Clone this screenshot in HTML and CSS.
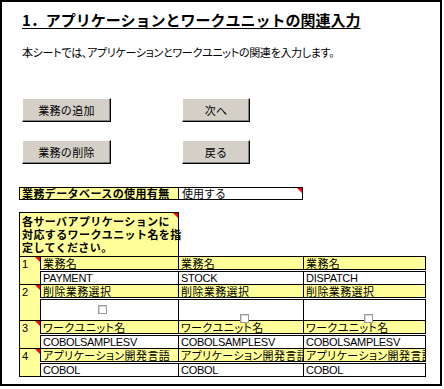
FILE: index.html
```html
<!DOCTYPE html>
<html lang="ja">
<head>
<meta charset="utf-8">
<link rel="stylesheet" href="styles.css">
</head>
<body>
<div class="frame">
  <h1 class="title">1．アプリケーションとワークユニットの関連入力</h1>
  <p class="lead">本シートでは、アプリケーションとワークユニットの関連を入力します。</p>
  <div class="buttons">
    <button class="btn">業務の追加</button>
    <button class="btn">次へ</button>
    <button class="btn">業務の削除</button>
    <button class="btn">戻る</button>
  </div>
  <div class="dbrow">
    <div class="dblabel">業務データベースの使用有無</div>
    <div class="dbvalue">使用する<span class="note"></span></div>
  </div>
  <div class="comment">各サーバアプリケーションに<br>対応するワークユニット名を指<br>定してください。<span class="note"></span></div>
  <table class="grid">
    <colgroup><col class="c-idx"><col class="c-1"><col class="c-2"><col class="c-3"></colgroup>
    <tr class="r-hd">
      <td class="idx" rowspan="2">1<span class="note"></span></td>
      <td class="hd">業務名</td><td class="hd">業務名</td><td class="hd">業務名</td>
    </tr>
    <tr class="r-val">
      <td class="val">PAYMENT</td><td class="val">STOCK</td><td class="val">DISPATCH</td>
    </tr>
    <tr class="r-hd">
      <td class="idx" rowspan="2">2<span class="note"></span></td>
      <td class="hd">削除業務選択</td><td class="hd">削除業務選択</td><td class="hd">削除業務選択</td>
    </tr>
    <tr class="r-cb">
      <td class="val cbcell"><span class="cb cb-1"></span></td>
      <td class="val cbcell"><span class="cb cb-2"></span></td>
      <td class="val cbcell"><span class="cb cb-3"></span></td>
    </tr>
    <tr class="r-hd">
      <td class="idx" rowspan="2">3<span class="note"></span></td>
      <td class="hd">ワークユニット名</td><td class="hd">ワークユニット名</td><td class="hd">ワークユニット名</td>
    </tr>
    <tr class="r-val">
      <td class="val">COBOLSAMPLESV</td><td class="val">COBOLSAMPLESV</td><td class="val">COBOLSAMPLESV</td>
    </tr>
    <tr class="r-hd">
      <td class="idx" rowspan="2">4<span class="note"></span></td>
      <td class="hd">アプリケーション開発言語</td><td class="hd">アプリケーション開発言語</td><td class="hd">アプリケーション開発言語</td>
    </tr>
    <tr class="r-val">
      <td class="val">COBOL</td><td class="val">COBOL</td><td class="val">COBOL</td>
    </tr>
  </table>
</div>
</body>
</html>
```
FILE: styles.css
```css
html, body {
  margin: 0;
  padding: 0;
  background: #ffffff;
}
body {
  font-family: "Noto Sans CJK JP", "Liberation Sans", sans-serif;
  color: #000;
}
.frame {
  box-sizing: border-box;
  width: 442px;
  height: 386px;
  border: 2px solid #000;
  overflow: hidden;
}
.title {
  margin: 9px 0 0 20px;
  font-size: 15px;
  line-height: 17px;
  font-weight: bold;
  text-decoration: underline;
  text-underline-offset: 2px;
  white-space: nowrap;
}
.lead {
  margin: 17px 0 0 20px;
  font-size: 11px;
  line-height: 14px;
  font-feature-settings: "palt";
  letter-spacing: -0.3px;
  white-space: nowrap;
}
.buttons {
  margin: 39px 0 0 20px;
  display: grid;
  grid-template-columns: 89px 68px;
  grid-auto-rows: 24px;
  column-gap: 71px;
  row-gap: 18px;
}
.btn {
  box-sizing: border-box;
  margin: 0;
  padding: 0;
  background: #d4d0c8;
  border-top: 1px solid #ffffff;
  border-left: 1px solid #ffffff;
  border-right: 1px solid #000;
  border-bottom: 1px solid #000;
  box-shadow: inset -1px -1px 0 #808080;
  font-family: "Noto Sans CJK JP", sans-serif;
  font-size: 11px;
  letter-spacing: 0.3px;
  color: #000;
}
.dbrow {
  margin: 23px 0 0 17px;
  display: flex;
  height: 13px;
}
.dblabel, .dbvalue {
  box-sizing: border-box;
  height: 13px;
  border: 1px solid #000;
  font-size: 11px;
  line-height: 11px;
  padding-left: 2px;
  white-space: nowrap;
}
.dblabel {
  width: 160px;
  background: #ffff99;
  font-weight: bold;
  letter-spacing: 0.4px;
}
.dbvalue {
  position: relative;
  width: 124px;
  border-left: 0;
  background: #fff;
  padding-left: 3px;
}
.note {
  position: absolute;
  top: 0;
  right: 0;
  width: 0;
  height: 0;
  border-top: 5px solid #ff0000;
  border-left: 5px solid transparent;
}
.comment {
  position: relative;
  box-sizing: border-box;
  margin: 12px 0 0 17px;
  width: 160px;
  height: 44px;
  border: 1px solid #000;
  border-bottom: 0;
  background: #ffff99;
  font-size: 11px;
  line-height: 13px;
  font-weight: bold;
  letter-spacing: 0.4px;
  padding: 2px 0 0 2px;
  white-space: nowrap;
}
.grid {
  margin-left: 17px;
  width: 406px;
  table-layout: fixed;
  border-collapse: collapse;
  border: 1px solid #000;
}
.c-idx { width: 21px; }
.c-1 { width: 138px; }
.c-2 { width: 125px; }
.c-3 { width: 122px; }
.grid td {
  border: 1px solid #000;
  padding: 0 0 0 2px;
  font-size: 11px;
  line-height: 12px;
  white-space: nowrap;
  overflow: hidden;
  vertical-align: middle;
}
.grid td.idx {
  position: relative;
  background: #ffff99;
  vertical-align: top;
  font-family: "Liberation Sans", sans-serif;
  font-size: 11px;
  padding-top: 1px;
}
.grid td.hd {
  background: #ffff99;
  border-bottom: 3px double #000;
  font-feature-settings: "palt";
  letter-spacing: 0.4px;
}
.grid td.val {
  background: #fff;
  font-family: "Liberation Sans", sans-serif;
  font-size: 11px;
  letter-spacing: -0.3px;
}
.r-hd { height: 13px; }
.r-val { height: 14px; }
.r-cb { height: 22px; }
.grid td.cbcell {
  position: relative;
  overflow: visible;
}
.cb {
  position: absolute;
  box-sizing: border-box;
  width: 9px;
  height: 9px;
  background: #fff;
  border: 1px solid #9a9a9a;
  box-shadow: inset 1px 1px 0 #d8d8d8;
}
.cb-1 { left: 57px; top: 5px; }
.cb-2 { left: 61px; top: 14px; }
.cb-3 { left: 60px; top: 14px; }
```
